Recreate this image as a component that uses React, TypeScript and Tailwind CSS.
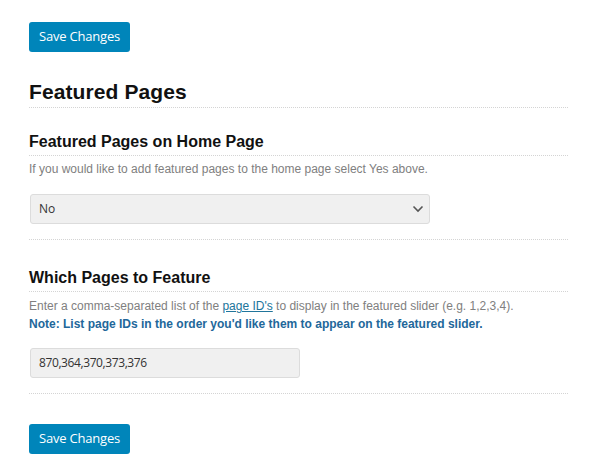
function SaveButton() {
  return (
    <button
      type="button"
      className="h-[30px] w-[101px] rounded-[3px] bg-[#0085ba] text-[13px] text-white font-['Open_Sans',sans-serif] tracking-[-0.2px]"
    >
      Save Changes
    </button>
  );
}

function Divider() {
  return <div className="border-b border-dotted border-[#d4d4d4]" />;
}

export default function App() {
  return (
    <div className="min-h-screen bg-white font-['Liberation_Sans',Arial,sans-serif]">
      <div className="w-[539px] ml-[29px] pt-[22px]">
        <SaveButton />

        <h2 className="mt-[28px] text-[21px] leading-[24px] font-bold text-[#111] pb-[3px] tracking-[0.1px]">
          Featured Pages
        </h2>
        <Divider />

        <h3 className="mt-[24px] text-[16px] leading-[20px] font-bold text-[#111] pb-[3px]">
          Featured Pages on Home Page
        </h3>
        <Divider />
        <p className="mt-[5px] text-[12px] leading-[16px] text-[#808080]">
          If you would like to add featured pages to the home page select Yes above.
        </p>

        <div className="mt-[17px] ml-[1px] w-[400px] h-[30px] flex items-center justify-between pl-[8px] pr-[5px] bg-[#f0f0f0] border border-[#dcdcdc] rounded-[3px]">
          <span className="text-[12px] text-[#333] font-['Open_Sans',sans-serif]">No</span>
          <svg width="12" height="8" viewBox="0 0 12 8" fill="none">
            <path d="M1.5 1.5 L6 6 L10.5 1.5" stroke="#555" strokeWidth="1.6" />
          </svg>
        </div>

        <div className="mt-[15px]">
          <Divider />
        </div>

        <h3 className="mt-[28px] text-[16px] leading-[20px] font-bold text-[#111] pb-[3px]">
          Which Pages to Feature
        </h3>
        <Divider />
        <p className="mt-[5px] text-[12px] leading-[18px] text-[#808080]">
          Enter a comma-separated list of the{" "}
          <a href="#" className="text-[#21759b] underline">page ID's</a> to display in the featured slider (e.g. 1,2,3,4).
        </p>
        <p className="text-[12px] leading-[18px] font-bold text-[#22679a]">
          Note: List page IDs in the order you'd like them to appear on the featured slider.
        </p>

        <div className="mt-[15px] ml-[1px] w-[270px] h-[30px] flex items-center px-[8px] bg-[#f0f0f0] border border-[#dcdcdc] rounded-[3px]">
          <span className="text-[12px] text-[#333] font-['Open_Sans',sans-serif] tracking-[-0.4px]">870,364,370,373,376</span>
        </div>

        <div className="mt-[15px]">
          <Divider />
        </div>

        <div className="mt-[30px]">
          <SaveButton />
        </div>
      </div>
    </div>
  );
}
